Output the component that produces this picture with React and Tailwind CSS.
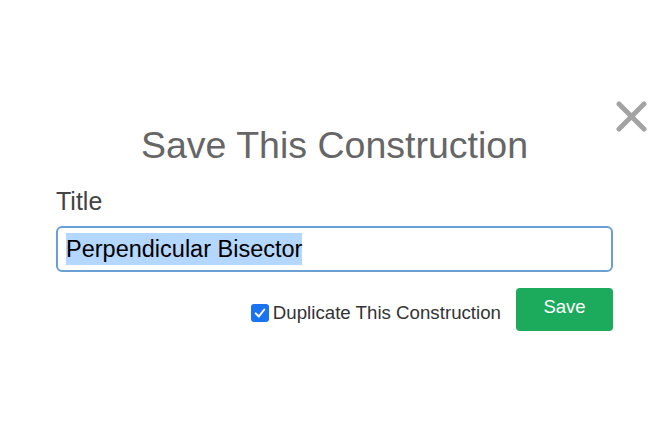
import React from "react";

export default function App() {
  return (
    <div className="relative w-[668px] h-[445px] bg-white pl-[56px] pr-[55px] pt-[127px] font-['Liberation_Sans',Arial,sans-serif]">
      <button className="absolute left-[616px] top-[101px] w-[31px] h-[31px]" aria-label="Close">
        <svg viewBox="0 0 31 31" className="w-full h-full">
          <path d="M3 3 L28 28 M28 3 L3 28" stroke="#a3a3a3" strokeWidth="5" strokeLinecap="round" />
        </svg>
      </button>

      <h1 className="text-[37.5px] leading-none text-[#666] text-center">Save This Construction</h1>

      <div className="mt-[24px] text-[25px] leading-none text-[#444]">Title</div>

      <div className="mt-[12px] h-[46px] border-2 border-[#6a9fd5] rounded-[6px] px-[8px] flex items-center">
        <span className="bg-[#b3d7fe] text-[23.5px] leading-[32px] text-black">Perpendicular Bisector</span>
      </div>

      <div className="mt-[16px] flex justify-end items-start gap-[15px]">
        <label className="mt-[16px] flex items-start gap-[4px]">
          <span className="w-[18px] h-[18px] rounded-[3px] bg-[#1a73f0] flex items-center justify-center">
            <svg viewBox="0 0 18 18" className="w-[14px] h-[14px]">
              <path d="M3.5 9.5 L7.5 13.5 L14.5 4.5" stroke="white" strokeWidth="2.6" fill="none" strokeLinecap="round" strokeLinejoin="round" />
            </svg>
          </span>
          <span className="text-[18.7px] leading-none text-[#333]">Duplicate This Construction</span>
        </label>
        <button className="w-[97px] h-[43px] pb-[3px] rounded-[4px] bg-[#1cab5c] text-white text-[18.5px] leading-none flex items-center justify-center">
          Save
        </button>
      </div>
    </div>
  );
}
